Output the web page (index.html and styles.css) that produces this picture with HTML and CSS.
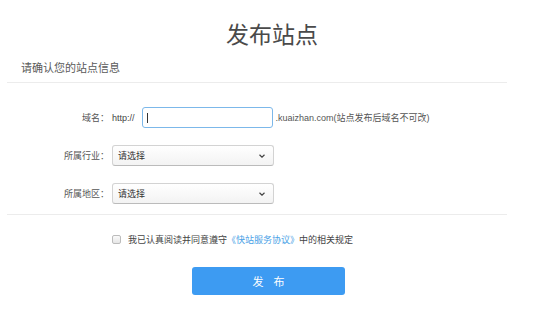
FILE: index.html
```html
<!DOCTYPE html>
<html lang="zh-CN">
<head>
<meta charset="utf-8">
<title>发布站点</title>
<link rel="stylesheet" href="styles.css">
</head>
<body>
<div class="page">
  <h1 class="title">发布站点</h1>
  <div class="subtitle">请确认您的站点信息</div>
  <div class="form">
    <div class="row">
      <label class="label">域名：</label>
      <span class="prefix">http://</span>
      <div class="input"><span class="caret"></span></div>
      <span class="suffix">.kuaizhan.com(站点发布后域名不可改)</span>
    </div>
    <div class="row">
      <label class="label">所属行业：</label>
      <div class="select"><span>请选择</span>
        <svg width="6" height="4" viewBox="0 0 6 4"><path d="M0.5 0.8 L3 3.2 L5.5 0.8" fill="none" stroke="#444" stroke-width="1.2"/></svg>
      </div>
    </div>
    <div class="row">
      <label class="label">所属地区：</label>
      <div class="select"><span>请选择</span>
        <svg width="6" height="4" viewBox="0 0 6 4"><path d="M0.5 0.8 L3 3.2 L5.5 0.8" fill="none" stroke="#444" stroke-width="1.2"/></svg>
      </div>
    </div>
  </div>
  <div class="agree">
    <span class="check"></span>
    <span class="agree-text">我已认真阅读并同意遵守<a class="link">《快站服务协议》</a>中的相关规定</span>
  </div>
  <div class="actions">
    <button class="btn">发&nbsp;&nbsp;&nbsp;&nbsp;布</button>
  </div>
</div>
</body>
</html>
```
FILE: styles.css
```css
html, body {
  margin: 0;
  padding: 0;
  background: #fff;
}
body {
  font-family: "Liberation Sans", "Noto Sans CJK SC", sans-serif;
  color: #555;
}
.page {
  margin-left: 7px;
  width: 500px;
}
.title {
  margin: 0;
  padding-top: 23px;
  font-size: 23px;
  line-height: 24px;
  font-weight: normal;
  color: #4a4a4a;
  text-align: center;
  padding-left: 30px;
}
.subtitle {
  margin-top: 15px;
  padding-left: 14px;
  font-size: 11px;
  line-height: 12px;
  color: #5a5a5a;
  padding-bottom: 8px;
  border-bottom: 1px solid #ececec;
}
.form {
  padding-top: 24px;
  padding-bottom: 10px;
  border-bottom: 1px solid #ececec;
  display: flex;
  flex-direction: column;
  gap: 17px;
}
.row {
  display: flex;
  align-items: center;
  height: 21px;
  font-size: 9px;
}
.label {
  width: 102px;
  text-align: right;
  margin-right: 3px;
  color: #555;
}
.prefix {
  color: #444;
  margin-right: 7px;
}
.input {
  height: 19px;
  border: 1px solid #7cb8ea;
  border-radius: 3px;
  display: flex;
  align-items: center;
  padding-left: 4px;
  box-sizing: content-box;
  width: 125px;
}
.caret {
  width: 1px;
  height: 10px;
  background: #333;
}
.suffix {
  margin-left: 3px;
  color: #555;
}
.select {
  height: 19px;
  border: 1px solid #d3d3d3;
  border-bottom-color: #bbb;
  border-radius: 3px;
  background: linear-gradient(#ffffff, #f3f3f3);
  display: flex;
  align-items: center;
  justify-content: space-between;
  padding: 0 8px 0 5px;
  box-sizing: content-box;
  width: 147px;
  color: #333;
}
.agree {
  margin-top: 18px;
  display: flex;
  align-items: center;
  height: 12px;
  padding-left: 105px;
  font-size: 9px;
  color: #444;
}
.check {
  width: 7px;
  height: 7px;
  border: 1px solid #bcbcbc;
  border-radius: 2px;
  background: linear-gradient(#fafafa, #e6e6e6);
  margin-right: 7px;
}
.link {
  color: #4a9fe6;
}
.actions {
  margin-top: 22px;
  padding-left: 185px;
}
.btn {
  width: 153px;
  height: 28px;
  border: none;
  border-radius: 3px;
  background: #3d9bf2;
  color: #fff;
  font-family: "Noto Sans CJK SC", sans-serif;
  font-size: 11px;
  padding: 0;
}
```
